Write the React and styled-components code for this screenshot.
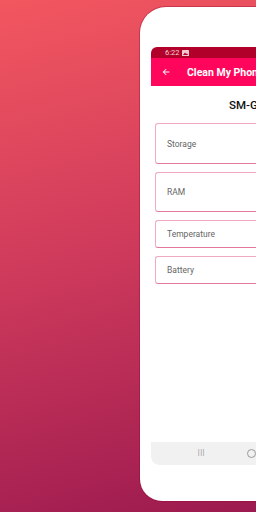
import React from "react";
import styled, { createGlobalStyle } from "styled-components";

const GlobalStyle = createGlobalStyle`
  html, body {
    margin: 0;
    padding: 0;
    width: 256px;
    height: 512px;
    overflow: hidden;
  }
  body {
    font-family: Roboto, "Liberation Sans", sans-serif;
  }
`;

const items = [
  { label: "Storage", height: 41 },
  { label: "RAM", height: 40 },
  { label: "Temperature", height: 28 },
  { label: "Battery", height: 28 },
];

const App = () => {
  return (
    <Main>
      <GlobalStyle />
      <Phone>
        <Screen>
          <StatusBar>
            <span>6:22</span>
            <svg width="7" height="6" viewBox="0 0 7 6">
              <rect x="0" y="0" width="7" height="6" rx="0.5" fill="#f3c7cf" />
              <path d="M1 5 L3 2.6 L4.3 4 L5 3.3 L6 5 Z" fill="#b3002b" />
            </svg>
          </StatusBar>
          <AppBar>
            <svg width="10" height="10" viewBox="0 0 24 24">
              <path
                d="M20 11H7.83l5.59-5.59L12 4l-8 8 8 8 1.41-1.41L7.83 13H20v-2z"
                fill="#fff"
              />
            </svg>
            <Title>Clean My Phone</Title>
          </AppBar>
          <Content>
            <Model>SM-G973F</Model>
            <List>
              {items.map((item) => (
                <Card key={item.label} $h={item.height}>
                  {item.label}
                </Card>
              ))}
            </List>
          </Content>
          <NavBar>
            <Recents>III</Recents>
            <Home />
          </NavBar>
        </Screen>
      </Phone>
    </Main>
  );
};

const Main = styled.div`
  width: 256px;
  height: 512px;
  box-sizing: border-box;
  padding: 7px 0 0 140px;
  overflow: hidden;
  background: linear-gradient(165deg, #f2575f 0%, #d13c5c 45%, #9c1a4f 100%);
`;

const Phone = styled.div`
  width: 250px;
  height: 494px;
  box-sizing: border-box;
  padding: 40px 0 0 11px;
  background: #fff;
  border-radius: 26px 0 0 22px;
  box-shadow: 0 0 0 1px rgba(140, 10, 50, 0.35);
`;

const Screen = styled.div`
  width: 239px;
  height: 418px;
  display: flex;
  flex-direction: column;
  border-radius: 6px 0 0 8px;
  overflow: hidden;
  background: #fff;
`;

const StatusBar = styled.div`
  height: 11px;
  flex-shrink: 0;
  display: flex;
  align-items: center;
  gap: 3px;
  padding-left: 14px;
  background: #b1002a;
  color: #f6d0d6;
  font-size: 7.5px;

  svg {
    display: block;
  }
`;

const AppBar = styled.div`
  height: 28px;
  flex-shrink: 0;
  display: flex;
  align-items: center;
  padding-left: 10px;
  background: #ff065c;

  svg {
    display: block;
  }
`;

const Title = styled.div`
  margin-left: 16px;
  color: #fff;
  font-size: 10.5px;
  font-weight: 700;
  white-space: nowrap;
`;

const Content = styled.div`
  flex: 1;
  display: flex;
  flex-direction: column;
`;

const Model = styled.div`
  height: 37px;
  display: flex;
  align-items: center;
  padding-left: 78px;
  font-size: 11.5px;
  font-weight: 500;
  color: #111;
  white-space: nowrap;
`;

const List = styled.div`
  display: flex;
  flex-direction: column;
  gap: 8px;
  padding-left: 4px;
`;

const Card = styled.div`
  height: ${(p) => p.$h}px;
  box-sizing: border-box;
  display: flex;
  align-items: center;
  padding-left: 11px;
  border: 1px solid #f1a9c3;
  border-bottom-color: #e2789c;
  border-right: none;
  border-radius: 3px 0 0 3px;
  font-size: 8.5px;
  color: #666;
`;

const NavBar = styled.div`
  height: 23px;
  flex-shrink: 0;
  display: flex;
  align-items: center;
  background: #f1f1f1;
  border-radius: 0 0 0 8px;
`;

const Recents = styled.span`
  margin-left: 46px;
  font-size: 8px;
  letter-spacing: 0.5px;
  color: #9a9a9a;
  font-family: "DejaVu Sans", sans-serif;
  transform: scaleX(0.8);
`;

const Home = styled.span`
  margin-left: 41px;
  width: 9px;
  height: 9px;
  box-sizing: border-box;
  border: 1.2px solid #9a9a9a;
  border-radius: 50%;
`;

export default App;
